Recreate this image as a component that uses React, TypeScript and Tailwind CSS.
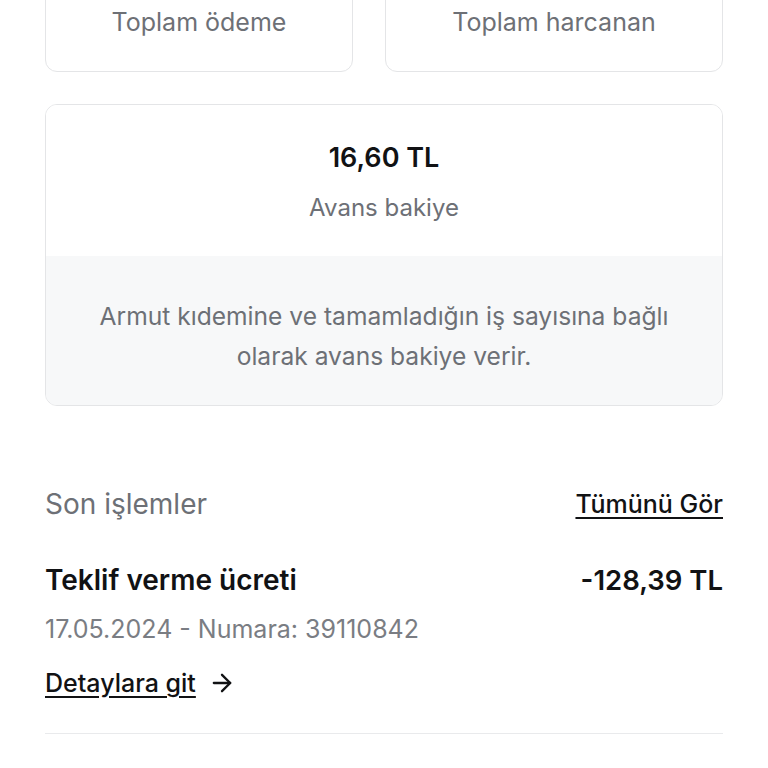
import { ArrowRight } from 'lucide-react';

function StatCard({ label, className }: { label: string; className: string }) {
  return (
    <div className={`rounded-xl border border-[#e4e5e7] bg-white pt-[47px] pb-[33px] text-center ${className}`}>
      <p className="text-[25px] leading-[32px] text-[#6d7076]">{label}</p>
    </div>
  );
}

export default function App() {
  return (
    <div
      className="min-h-[768px] overflow-hidden bg-white px-[45px]"
      style={{ fontFamily: 'Inter, "Noto Sans", sans-serif' }}
    >
      <div className="-mt-[42px] flex gap-[32px]">
        <StatCard label="Toplam ödeme" className="w-[308px]" />
        <StatCard label="Toplam harcanan" className="flex-1" />
      </div>

      <div className="mt-[32px] overflow-hidden rounded-xl border border-[#e4e5e7]">
        <div className="flex h-[151px] flex-col items-center bg-white pt-[35px]">
          <p className="text-[27px] font-semibold leading-[36px] text-[#111214]">16,60 TL</p>
          <p className="mt-[16px] text-[24px] leading-[32px] text-[#6d7076]">Avans bakiye</p>
        </div>
        <div className="h-[149px] bg-[#f7f8f9] px-[30px] pt-[40px]">
          <p className="text-center text-[24.6px] leading-[40px] text-[#6d7076]">
            Armut kıdemine ve tamamladığın iş sayısına bağlı
            <br />
            olarak avans bakiye verir.
          </p>
        </div>
      </div>

      <div className="mt-[80px] flex items-center justify-between">
        <h2 className="text-[28px] leading-[36px] text-[#6d7076]">Son işlemler</h2>
        <a className="text-[25px] font-medium leading-[36px] text-[#111214] underline underline-offset-4">
          Tümünü Gör
        </a>
      </div>

      <div className="mt-[40px] border-b border-[#e9eaec] pb-[34px]">
        <div className="flex items-center justify-between">
          <p className="text-[28px] font-semibold leading-[36px] text-[#111214]">Teklif verme ücreti</p>
          <p className="text-[27.5px] font-semibold leading-[36px] text-[#111214]">-128,39 TL</p>
        </div>
        <p className="mt-[15px] text-[25px] leading-[32px] text-[#7a7d83]">17.05.2024 - Numara: 39110842</p>
        <a className="mt-[22px] flex items-center gap-[12px] text-[25px] font-medium leading-[32px] text-[#111214]">
          <span className="underline underline-offset-4">Detaylara git</span>
          <ArrowRight size={28} strokeWidth={2} />
        </a>
      </div>
    </div>
  );
}
